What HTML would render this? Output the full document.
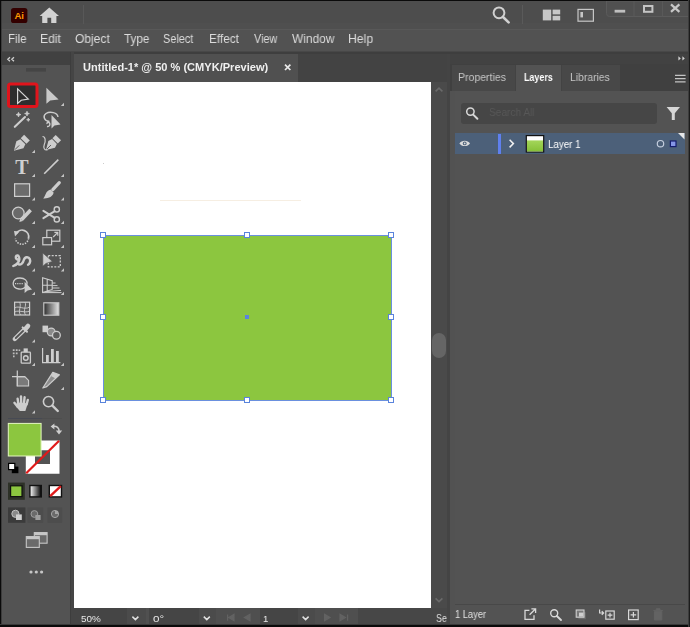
<!DOCTYPE html>
<html>
<head>
<meta charset="utf-8">
<title>Illustrator</title>
<style>
html,body{margin:0;padding:0;}
body{width:690px;height:627px;overflow:hidden;background:#535353;font-family:"Liberation Sans",sans-serif;position:relative;color:#dcdcdc;}
.abs{position:absolute;}
.t{position:absolute;white-space:nowrap;transform-origin:0 0;line-height:1;will-change:transform;}
#titlebar{left:0;top:0;width:690px;height:29px;background:#4d4d4d;}
#menubar{left:0;top:29px;width:690px;height:22px;background:#525252;border-top:1px solid #585858;box-sizing:border-box;}
.m{font-size:13px;color:#e4e4e4;top:33px;}
#strip{left:0;top:51px;width:690px;height:3px;background:#3e3e3e;border-top:1px solid #484848;box-sizing:border-box;}
#lefthead{left:0;top:52px;width:71px;height:13px;background:#414141;}
#toolbar{left:0;top:65px;width:71px;height:562px;background:#535353;}
#tooldiv{left:70px;top:52px;width:3px;height:575px;background:#454545;border-left:1px solid #3d3d3d;}
#tabbar{left:74px;top:54px;width:373px;height:28px;background:#434343;}
#doctab{left:74px;top:54px;width:224px;height:28px;background:#505050;}
#canvas{left:74px;top:82px;width:357px;height:526px;background:#ffffff;}
#vscroll{left:431px;top:82px;width:16px;height:526px;background:#4a4a4a;}
#thumb{left:432px;top:333px;width:14px;height:25px;border-radius:7px;background:#656565;}
#statusbar{left:74px;top:608px;width:373px;height:16px;background:#474747;}
#paneldiv{left:447px;top:54px;width:3px;height:573px;background:#444444;}
#panelhead{left:450px;top:54px;width:240px;height:10px;background:#424242;}
#paneltabs{left:450px;top:64px;width:240px;height:27px;background:#404040;}
#panel{left:450px;top:91px;width:240px;height:536px;background:#535353;}
.ptab{position:absolute;top:65px;height:26px;}
#rect{left:103px;top:235px;width:287px;height:164px;background:#8cc63f;border:1px solid #6a90de;}
.h{position:absolute;width:4px;height:4px;background:#fff;border:1px solid #5a84dc;}
#edgeL{left:0;top:0;width:1px;height:627px;background:#0a0a0a;border-right:1px solid #3c3c3c;}
#edgeT{left:0;top:0;width:690px;height:1px;background:#0a0a0a;}
#edgeB{left:0;top:624px;width:690px;height:3px;background:#0a0a0a;border-top:1px solid #3a3a3a;box-sizing:border-box;}
#edgeR{left:688px;top:0;width:1px;height:627px;background:#3c3c3c;border-right:1px solid #1c1c1c;}
.sb{font-size:10.5px;color:#e6e6e6;}
.pt{font-size:11px;}
</style>
</head>
<body>
<div id="titlebar" class="abs"></div>
<div id="menubar" class="abs"></div>

<div id="strip" class="abs"></div>
<div id="lefthead" class="abs"></div>
<div id="toolbar" class="abs"></div>
<div id="tooldiv" class="abs"></div>
<div id="tabbar" class="abs"></div>
<div id="doctab" class="abs"></div>

<div id="canvas" class="abs"></div>
<div id="vscroll" class="abs"></div>
<div id="thumb" class="abs"></div>
<div id="statusbar" class="abs"></div>
<div id="paneldiv" class="abs"></div>
<div id="panelhead" class="abs"></div>
<div id="paneltabs" class="abs"></div>
<div id="panel" class="abs"></div>
<div id="rect" class="abs"></div>
<svg id="tbsvg" class="abs" style="left:0;top:0" width="72" height="627" viewBox="0 0 72 627">
<defs>
<linearGradient id="gr1" x1="0" x2="1" y1="0" y2="0"><stop offset="0" stop-color="#2c2c2c"/><stop offset="1" stop-color="#e4e4e4"/></linearGradient>
<linearGradient id="gr2" x1="0" x2="1" y1="0" y2="0"><stop offset="0" stop-color="#ffffff"/><stop offset="1" stop-color="#000000"/></linearGradient>
<path id="fly" d="M0 0 L-3.2 0 L0 -3.2 Z" fill="#c4c4c4"/>
<g id="pen"><path d="M0 10.4 L-5 2 L-3.6 -2.2 L3.6 -2.2 L5 2 Z" fill="#cdcdcd"/><rect x="-4" y="-8" width="8" height="4.8" fill="#cdcdcd"/><path d="M0 9 L0 3" stroke="#535353" stroke-width="0.9"/></g>
</defs>
<!-- collapse chevrons and grip -->
<path d="M10 57.2 L7.8 59.2 L10 61.2 M14 57.2 L11.8 59.2 L14 61.2" stroke="#d0d0d0" stroke-width="1.3" fill="none"/>
<rect x="26" y="68" width="20" height="3.6" fill="#454545"/>
<!-- row1 -->
<rect x="8.5" y="84" width="28.5" height="22.5" rx="2" fill="#2e2e2e" stroke="#e0141c" stroke-width="3"/>
<path d="M17.6 88.8 L17.6 103.4 L21.2 100.2 L28.3 99 Z" fill="none" stroke="#d6d6d6" stroke-width="1.2" stroke-linejoin="miter"/>
<path d="M46.4 87.8 L46.4 103.8 L50.2 100.4 L58.6 99.4 Z" fill="#c9c9c9"/>
<use href="#fly" x="64" y="106"/>
<!-- row2 magic wand / lasso -->
<path d="M14.8 126.8 L25 117" stroke="#cdcdcd" stroke-width="2.1" stroke-linecap="round"/>
<path d="M18.5 112.3 L19.2 114 L21 114.6 L19.2 115.3 L18.5 117 L17.8 115.3 L16 114.6 L17.8 114 Z M27 111.2 L27.7 113 L29.4 113.6 L27.7 114.2 L27 116 L26.3 114.2 L24.6 113.6 L26.3 113 Z M28.3 118 L28.8 119.2 L30 119.7 L28.8 120.2 L28.3 121.4 L27.8 120.2 L26.6 119.7 L27.8 119.2 Z" fill="#cdcdcd" stroke="#cdcdcd" stroke-width="0.7"/>
<path d="M49.5 121.5 C44 121 42.5 116 46 113.5 C50 111 57.5 112.5 58 117 M47 126.5 C49.5 127 50.5 124.5 49.5 123 C48.5 121.5 46.3 122.5 47.2 124" fill="none" stroke="#cdcdcd" stroke-width="1.4"/>
<path d="M51.5 115 L51.5 128.5 L54.5 125.5 L60.5 124.5 Z" fill="#cdcdcd"/>
<!-- row3 pen / curvature -->
<use href="#pen" transform="translate(21.3 143.3) rotate(45)"/>
<use href="#fly" x="35" y="153"/>
<use href="#pen" transform="translate(53 143) rotate(45) scale(0.95)"/>
<path d="M42.5 136.5 C45.5 136.5 45.8 141 44.3 144.5 C43 148 44.5 150.5 47.5 149.8" fill="none" stroke="#cdcdcd" stroke-width="1.2"/>
<!-- row4 type / line -->
<text x="21.9" y="174" font-family="Liberation Serif, serif" font-size="20" font-weight="bold" text-anchor="middle" fill="#cfcfcf">T</text>
<use href="#fly" x="35" y="177"/>
<path d="M44.2 173.8 L58.3 159.6" stroke="#cdcdcd" stroke-width="1.6"/>
<use href="#fly" x="64" y="177"/>
<!-- row5 rect / brush -->
<rect x="14.6" y="183.8" width="15" height="12.6" fill="#6c6c6c" stroke="#cfcfcf" stroke-width="1.2"/>
<use href="#fly" x="35" y="200.5"/>
<path d="M59.3 182.6 L52.8 189.6" stroke="#cdcdcd" stroke-width="3.2" stroke-linecap="round"/>
<path d="M50.6 189.6 L53.6 192.6 C53 197 48 198.8 43.2 198.4 C45.8 196.4 45.2 191 50.6 189.6 Z" fill="#cdcdcd"/>
<use href="#fly" x="64" y="200.5"/>
<!-- row6 shaper / scissors -->
<circle cx="18.3" cy="213" r="5.8" fill="#6a6a6a" stroke="#cdcdcd" stroke-width="1.3"/>
<path d="M21.5 219.8 L30.6 210" stroke="#cdcdcd" stroke-width="3.6"/>
<path d="M19.3 222 L20.2 218.4 L22.8 221 Z" fill="#cdcdcd"/>
<use href="#fly" x="35" y="224"/>
<circle cx="56.8" cy="209.4" r="2.6" fill="none" stroke="#cdcdcd" stroke-width="1.4"/>
<circle cx="56.8" cy="219.4" r="2.6" fill="none" stroke="#cdcdcd" stroke-width="1.4"/>
<path d="M54.8 211.2 L43.4 218.2 M54.8 217.8 L43.4 210.8" stroke="#cdcdcd" stroke-width="2" stroke-linecap="round"/>
<use href="#fly" x="64" y="224"/>
<!-- row7 rotate / scale -->
<path d="M16.3 233.5 A6.6 6.6 0 0 1 28.5 238.2" fill="none" stroke="#cdcdcd" stroke-width="1.8"/>
<path d="M28.5 238.2 A6.6 6.6 0 0 1 15.4 238.6" fill="none" stroke="#cdcdcd" stroke-width="1.6" stroke-dasharray="1.4 1.2"/>
<path d="M14 231 L19.5 231.6 L15 236.6 Z" fill="#cdcdcd"/>
<use href="#fly" x="35" y="248"/>
<rect x="46.8" y="230.2" width="13" height="11" fill="none" stroke="#cdcdcd" stroke-width="1.2"/>
<rect x="42.8" y="237.6" width="8.8" height="7.2" fill="#535353" stroke="#cdcdcd" stroke-width="1.2"/>
<path d="M53.2 237 L57.6 232.6 M54.4 232.4 L57.8 232.4 L57.8 235.8" fill="none" stroke="#cdcdcd" stroke-width="1.2"/>
<use href="#fly" x="64" y="248"/>
<!-- row8 width / free transform -->
<path d="M13.3 266 C17 264.5 19.6 261.5 19.3 258 C19 255 16 254.6 15.8 257 C15.6 259 17.6 260 19.4 259.2 M17.6 263.6 C20.5 266.2 23.2 263 24 259.6 C24.8 256.6 28.6 256.4 29.8 259 C30.8 261.4 29.6 264 28 264.8" fill="none" stroke="#cdcdcd" stroke-width="2.4" stroke-linecap="round"/>
<use href="#fly" x="35" y="271.5"/>
<rect x="48.3" y="255.6" width="12" height="11.2" fill="none" stroke="#cdcdcd" stroke-width="1.3" stroke-dasharray="2 1.4"/>
<path d="M42.8 253 L42.8 266.2 L46 263.4 L52.4 261.4 Z" fill="#cdcdcd" stroke="#535353" stroke-width="0.6"/>
<use href="#fly" x="64" y="271.5"/>
<!-- row9 shape builder / perspective -->
<path d="M20 278 C25 278 27.5 281 27 284 C26.5 288 22 289.5 19 289 C15 288.5 12.8 286 13.2 283 C13.6 280 16 278 20 278 Z" fill="none" stroke="#cdcdcd" stroke-width="1.3"/>
<path d="M15 283.6 L23.5 283.6" stroke="#cdcdcd" stroke-width="1.2" stroke-dasharray="1.2 1"/>
<path d="M24.6 281.8 L24.6 293 L27.6 290.4 L32 289.4 Z" fill="#cdcdcd"/>
<use href="#fly" x="35" y="295"/>
<path d="M42.6 277.8 L52.2 280.6 L52.2 289.4 L42.6 292.6 Z M47.2 279.2 L47.2 291 M42.6 285.2 L52.2 285" fill="none" stroke="#cdcdcd" stroke-width="1.1"/>
<path d="M52.2 283 L55.5 283 M52.2 285.6 L57.5 285.6 M52.2 288 L59.5 288 M46 291.6 L61 290.4 M42.6 292.6 L61.5 292.6" fill="none" stroke="#cdcdcd" stroke-width="1"/>
<use href="#fly" x="64" y="295"/>
<!-- row10 mesh / gradient -->
<rect x="14.6" y="302.2" width="15" height="12.8" fill="#5e5e5e" stroke="#cdcdcd" stroke-width="1.2"/>
<path d="M14.6 308 C19 305 24 310.5 29.6 307 M19.5 302.2 C22 306 17.5 311 20.5 315 M25 302.2 C27 306 22.5 310 25.5 315 M14.6 312 C19 309.5 25 313.5 29.6 311" fill="none" stroke="#cdcdcd" stroke-width="0.9"/>
<rect x="43.8" y="302.8" width="15" height="12.4" fill="url(#gr1)" stroke="#c6c6c6" stroke-width="1.2"/>
<!-- row11 eyedropper / blend -->
<path d="M14.8 339 L24.6 329.4" stroke="#cdcdcd" stroke-width="4.4" stroke-linecap="round"/>
<path d="M15.8 338 L24.4 329.6" stroke="#535353" stroke-width="1.8" stroke-linecap="round"/>
<path d="M22.6 327.4 L27 331.8" stroke="#cdcdcd" stroke-width="2" stroke-linecap="round"/>
<path d="M25.4 329 L28 326" stroke="#cdcdcd" stroke-width="4.6" stroke-linecap="round"/>
<use href="#fly" x="35" y="342.5"/>
<rect x="42.5" y="325.6" width="5.6" height="6.6" fill="#cdcdcd"/>
<circle cx="51.2" cy="332" r="3.9" fill="#8a8a8a" stroke="#cdcdcd" stroke-width="1.2"/>
<circle cx="56.4" cy="335.2" r="3.9" fill="#5c5c5c" stroke="#cdcdcd" stroke-width="1.3"/>
<!-- row12 symbol sprayer / graph -->
<rect x="21.2" y="352.2" width="9.2" height="11" rx="0.8" fill="none" stroke="#cdcdcd" stroke-width="1.3"/>
<circle cx="25.8" cy="358" r="2.3" fill="none" stroke="#cdcdcd" stroke-width="1.4"/>
<rect x="23.6" y="348.4" width="4.2" height="3.8" fill="#cdcdcd"/>
<path d="M12.8 349.2 h1.8 v1.8 h-1.8 Z M15.8 349.2 h1.8 v1.8 h-1.8 Z M18.6 349.6 h1.6 v1.4 h-1.6 Z M12.8 352.4 h1.8 v1.8 h-1.8 Z M15.8 352.4 h1.8 v1.8 h-1.8 Z M13 355.6 h1.6 v1.6 h-1.6 Z" fill="#bdbdbd"/>
<use href="#fly" x="35" y="366"/>
<path d="M42.6 348 L42.6 362.6 L60.4 362.6" fill="none" stroke="#cdcdcd" stroke-width="1.2"/>
<rect x="46" y="355" width="2.8" height="7.2" fill="#cdcdcd"/>
<rect x="51" y="349" width="2.8" height="13.2" fill="#cdcdcd"/>
<rect x="56" y="351" width="2.8" height="11.2" fill="#cdcdcd"/>
<use href="#fly" x="64" y="366"/>
<!-- row13 artboard / slice -->
<path d="M17.3 376.6 L24.8 376.6 L28.6 380.4 L28.6 386 L17.3 386 Z" fill="#7a7a7a" stroke="#cdcdcd" stroke-width="1.1"/>
<path d="M17.3 370.4 L17.3 386.2 M12 376.6 L25 376.6" stroke="#cdcdcd" stroke-width="1.2"/>
<path d="M42.8 388 L52.8 372.4 L59.4 374.8 L46.8 386.6 Z" fill="#8d8d8d" stroke="#cdcdcd" stroke-width="1.2" stroke-linejoin="round"/>
<path d="M53 372.6 L59.2 374.8 L55.5 378.5 L51 376 Z" fill="#cdcdcd"/>
<use href="#fly" x="64" y="390"/>
<!-- row14 hand / zoom -->
<path d="M18.4 404 L17.6 398.8 M21.2 403 L21 396.4 M24 403 L24.6 397.2 M26.6 404.5 L27.8 400 M17.4 406.4 L14.4 402.8" stroke="#cdcdcd" stroke-width="2.4" stroke-linecap="round"/>
<path d="M16.8 402.5 L27.8 403.2 L25.4 411 L19.8 411 L16 406.5 Z" fill="#cdcdcd"/>
<use href="#fly" x="35" y="413.5"/>
<circle cx="48.5" cy="401.6" r="5.1" fill="none" stroke="#cdcdcd" stroke-width="1.6"/>
<path d="M52.4 405.6 L57.8 411" stroke="#cdcdcd" stroke-width="2.4" stroke-linecap="round"/>
<!-- separator -->
<rect x="8" y="418" width="34" height="1" fill="#474a53"/><rect x="42" y="418" width="20" height="1" fill="#4e4e4e"/>
<!-- fill / stroke -->
<path d="M25.8 440.4 H59.5 V473.7 H25.8 Z M35 450.2 V464 H50 V450.2 Z" fill="#ffffff" fill-rule="evenodd"/>
<path d="M26.2 473.3 L59.1 440.8" stroke="#e01a1a" stroke-width="2.2"/>
<rect x="8.3" y="423.4" width="32.8" height="32.6" fill="#8cc63f" stroke="#e4f7c0" stroke-width="1"/>
<path d="M52 426.5 C57 425.5 59.5 428 59 432" fill="none" stroke="#cdcdcd" stroke-width="1.6"/>
<path d="M54.4 423.4 L54.4 429.6 L50.6 426.5 Z M55.8 430.6 L62.2 430.6 L59 434.6 Z" fill="#cdcdcd"/>
<rect x="11.8" y="466.6" width="6.6" height="6.6" fill="#000"/>
<rect x="8.6" y="463.4" width="6.2" height="6.2" fill="#fff" stroke="#000" stroke-width="1.2"/>
<!-- color / gradient / none -->
<rect x="8" y="482.6" width="16.8" height="17.2" fill="#2d3127"/>
<rect x="10.6" y="485.8" width="11.4" height="10.8" fill="#8cc63f" stroke="#101010" stroke-width="1.2"/>
<rect x="29.9" y="485.5" width="11.4" height="11.4" fill="url(#gr2)" stroke="#111" stroke-width="1.4"/>
<rect x="49.3" y="485.5" width="12.2" height="11.4" fill="#fff" stroke="#111" stroke-width="1.4"/>
<path d="M50.2 496.2 L60.8 486.2" stroke="#e01a1a" stroke-width="2.4"/>
<!-- drawing modes -->
<rect x="8" y="507.4" width="17.4" height="15.4" fill="#3b3b3b"/>
<rect x="27.6" y="507.4" width="15.6" height="15.4" fill="#4d4d4d"/>
<rect x="47.6" y="507.4" width="14.6" height="15.4" fill="#4d4d4d"/>
<circle cx="15.4" cy="513.8" r="3.6" fill="#8a8a8a" stroke="#c4c4c4" stroke-width="1"/>
<rect x="16" y="514.4" width="5.8" height="5.6" fill="#d0d0d0"/>
<circle cx="34.4" cy="514" r="3.4" fill="#6a6a6a" stroke="#9d9d9d" stroke-width="1"/>
<rect x="35.4" y="515" width="5.2" height="5" fill="#9d9d9d"/>
<circle cx="55" cy="514" r="3.6" fill="#6a6a6a" stroke="#a5a5a5" stroke-width="1"/>
<rect x="55" y="511" width="3" height="3" fill="#a5a5a5"/>
<!-- screen mode -->
<rect x="34.3" y="532.6" width="12.8" height="10.6" fill="#6a6a6a" stroke="#c6c6c6" stroke-width="1.1"/>
<rect x="34.3" y="532.6" width="12.8" height="2.6" fill="#c6c6c6"/>
<rect x="26.3" y="536.6" width="13" height="10.8" fill="#6a6a6a" stroke="#c6c6c6" stroke-width="1.1"/>
<rect x="26.3" y="536.6" width="13" height="2.6" fill="#c6c6c6"/>
<!-- dots -->
<circle cx="31" cy="572" r="1.6" fill="#c6c6c6"/><circle cx="36.3" cy="572" r="1.6" fill="#c6c6c6"/><circle cx="41.6" cy="572" r="1.6" fill="#c6c6c6"/>
</svg>
<!-- title bar icons -->
<svg class="abs" style="left:0;top:0" width="690" height="30" viewBox="0 0 690 30">
<rect x="0" y="23" width="690" height="6" fill="#4f4f4f"/>
<rect x="11" y="8" width="16.4" height="15" rx="2.6" fill="#330000"/>
<text x="19.2" y="19.3" font-family="Liberation Sans, sans-serif" font-size="9.6" font-weight="bold" text-anchor="middle" fill="#ff9a00">Ai</text>
<path d="M49.3 7.6 L59 16 L56.4 16 L56.4 23 L51.2 23 L51.2 17.8 L47.4 17.8 L47.4 23 L42.2 23 L42.2 16 L39.6 16 Z" fill="#d2d2d2"/>
<rect x="83" y="5" width="1" height="19" fill="#585858"/>
<circle cx="499" cy="12.8" r="5.4" fill="none" stroke="#d0d0d0" stroke-width="2"/>
<path d="M503 17 L508.6 22.4" stroke="#d0d0d0" stroke-width="2.6" stroke-linecap="round"/>
<rect x="522" y="5" width="1" height="19" fill="#5a5a5a"/>
<rect x="542.8" y="9.6" width="8.4" height="10.8" fill="#c6c6c6"/>
<rect x="552.6" y="9.6" width="7.6" height="4.8" fill="#c6c6c6"/>
<rect x="552.6" y="15.8" width="7.6" height="4.6" fill="#c6c6c6"/>
<rect x="578" y="9.4" width="15.4" height="11.8" fill="#555" stroke="#c6c6c6" stroke-width="1.2"/>
<rect x="580.4" y="12" width="2.6" height="5.4" fill="#c6c6c6"/>
<path d="M606.5 1 L606.5 13.5 Q606.5 16.5 609.5 16.5 L690 16.5 L690 1 Z" fill="#505050" stroke="#5b5b5b" stroke-width="1"/>
<path d="M634 1 V16.5 M662.4 1 V16.5" stroke="#5b5b5b" stroke-width="1"/>
<rect x="614.6" y="9.8" width="10.6" height="2.8" fill="#bfbfbf"/>
<rect x="644" y="6" width="8.4" height="5.8" fill="none" stroke="#c4c4c4" stroke-width="2"/>
<path d="M671 4.4 L679.4 11.8 M679.4 4.4 L671 11.8" stroke="#c8c8c8" stroke-width="2.2"/>
</svg>
<!-- doc tab close -->
<svg class="abs" style="left:280px;top:60px" width="16" height="16" viewBox="0 0 16 16"><path d="M5 4.6 L10.4 10 M10.4 4.6 L5 10" stroke="#e8e8e8" stroke-width="1.7"/></svg>
<!-- artboard faint marks -->
<div class="abs" style="left:160px;top:200px;width:141px;height:1px;background:#f6eee2"></div>
<div class="abs" style="left:103px;top:163px;width:1px;height:1px;background:#ccc"></div>
<!-- selection handles -->
<div class="h" style="left:100px;top:232px"></div><div class="h" style="left:244px;top:232px"></div><div class="h" style="left:388px;top:232px"></div>
<div class="h" style="left:100px;top:314px"></div><div class="h" style="left:388px;top:314px"></div>
<div class="h" style="left:100px;top:397px"></div><div class="h" style="left:244px;top:397px"></div><div class="h" style="left:388px;top:397px"></div>
<div class="abs" style="left:245px;top:315px;width:4px;height:4px;background:#5a84dc"></div>
<!-- scroll arrows -->
<svg class="abs" style="left:431px;top:82px" width="16" height="526" viewBox="0 0 16 526">
<path d="M4.6 9.4 L8 6.2 L11.4 9.4" fill="none" stroke="#6a6a6a" stroke-width="1.6"/>
<path d="M4.6 516.4 L8 519.6 L11.4 516.4" fill="none" stroke="#6a6a6a" stroke-width="1.6"/>
</svg>
<!-- status bar -->
<div class="abs" style="left:74px;top:608px;width:53px;height:16px;background:#454545"></div>
<div class="abs" style="left:127px;top:608px;width:19px;height:16px;background:#4b4b4b"></div>
<div class="abs" style="left:146px;top:608px;width:3px;height:16px;background:#505050"></div>
<div class="abs" style="left:149px;top:608px;width:50px;height:16px;background:#454545"></div>
<div class="abs" style="left:199px;top:608px;width:17px;height:16px;background:#4b4b4b"></div>
<div class="abs" style="left:216px;top:608px;width:142px;height:16px;background:#4f4f4f"></div>
<div class="abs" style="left:260px;top:608px;width:38px;height:16px;background:#454545"></div>
<div class="abs" style="left:298px;top:608px;width:17px;height:16px;background:#4b4b4b"></div>
<svg class="abs" style="left:74px;top:608px" width="373" height="16" viewBox="0 0 373 16">
<path d="M58.4 8.6 L61.4 11.6 L64.4 8.6 M129.8 8.6 L132.8 11.6 L135.8 8.6 M228.6 8.6 L231.6 11.6 L234.6 8.6" fill="none" stroke="#e0e0e0" stroke-width="1.5"/>
<path d="M153.6 6.4 V12.8 M160 6.4 V12.8 L154.8 9.6 Z M176 6.4 V12.8 L170.4 9.6 Z M250.6 6.4 V12.8 L256 9.6 Z M266 6.4 V12.8 L271.4 9.6 Z M273.6 6.4 V12.8" fill="#626262" stroke="#626262" stroke-width="1.2"/>
</svg>
<!-- right panel -->
<div class="abs" style="left:452px;top:65px;width:63px;height:26px;background:#484848"></div>
<div class="abs" style="left:515px;top:65px;width:47px;height:26px;background:#535353"></div>
<div class="abs" style="left:562px;top:65px;width:58px;height:26px;background:#484848"></div>
<div class="abs" style="left:515px;top:65px;width:1px;height:26px;background:#434343"></div>
<div class="abs" style="left:561px;top:65px;width:1px;height:26px;background:#434343"></div>
<div class="abs" style="left:450px;top:91px;width:5px;height:533px;background:#525252"></div>
<div class="abs" style="left:455px;top:604px;width:230px;height:1px;background:#484848"></div>
<div class="abs" style="left:461px;top:103px;width:196px;height:21px;border-radius:3px;background:#464646"></div>
<div class="abs" style="left:455px;top:133px;width:229.5px;height:21px;background:#4c6079"></div>
<div class="abs" style="left:497.6px;top:134px;width:3.2px;height:19.5px;background:#5f80ee"></div>
<svg class="abs" style="left:450px;top:55px" width="240" height="572" viewBox="450 55 240 572">
<defs><linearGradient id="tg" x1="0" x2="0" y1="0" y2="1"><stop offset="0" stop-color="#a4d65a"/><stop offset="1" stop-color="#86c038"/></linearGradient></defs>
<path d="M678.4 56.2 L680.8 58.4 L678.4 60.6 Z M682.4 56.2 L684.8 58.4 L682.4 60.6 Z" fill="#d4d4d4"/>
<path d="M675 75.4 H685.6 M675 78.6 H685.6 M675 81.8 H685.6" stroke="#c4c4c4" stroke-width="1.3"/>
<circle cx="470.4" cy="111.6" r="3.7" fill="none" stroke="#d8d8d8" stroke-width="1.5"/>
<path d="M473.2 114.6 L477.4 118.8" stroke="#d8d8d8" stroke-width="2" stroke-linecap="round"/>
<path d="M666.6 107 H680 L674.8 113.2 V120 L671.8 120 V113.2 Z" fill="#d6d6d6"/>
<!-- eye -->
<path d="M459.4 143.4 C461.5 140 467.8 140 470 143.4 C467.8 146.8 461.5 146.8 459.4 143.4 Z" fill="#dcdcdc"/>
<circle cx="464.7" cy="143.4" r="1.9" fill="#4c6079"/><circle cx="464.7" cy="143.4" r="0.9" fill="#dcdcdc"/>
<path d="M509.6 139.8 L513.4 143.6 L509.6 147.4" fill="none" stroke="#f0f0f0" stroke-width="1.5"/>
<rect x="526.3" y="135.6" width="17.4" height="16.4" fill="#ffffff" stroke="#111" stroke-width="1.2"/>
<rect x="527" y="140.4" width="16" height="11" fill="url(#tg)"/>
<circle cx="660.5" cy="143.7" r="3.2" fill="none" stroke="#c4cede" stroke-width="1.2"/>
<rect x="670.4" y="141" width="5.6" height="5.6" fill="#8595e6" stroke="#141c6e" stroke-width="1.2"/>
<path d="M678 133 H684.5 V139.5 Z" fill="#e8e8e8"/>
<!-- footer icons -->
<path d="M529.4 610.4 H525 V619.4 H534 V615.2" fill="none" stroke="#d8d8d8" stroke-width="1.3"/>
<path d="M529.6 614.8 L535.4 609 M531.4 608.8 H535.6 V613" fill="none" stroke="#d8d8d8" stroke-width="1.3"/>
<circle cx="554.2" cy="613.2" r="3.5" fill="none" stroke="#d8d8d8" stroke-width="1.4"/>
<path d="M556.8 616 L561 620" stroke="#d8d8d8" stroke-width="1.9" stroke-linecap="round"/>
<rect x="578.4" y="612.2" width="7.4" height="7" fill="#6a6a6a"/>
<rect x="576.2" y="610" width="7.8" height="7.2" fill="#7a7a7a" stroke="#d0d0d0" stroke-width="1.1"/>
<rect x="579" y="612.6" width="4.4" height="4" fill="#cfcfcf"/>
<path d="M599.6 609.4 V613 H603.4 M601.8 611.2 L603.6 613 L601.8 614.8" fill="none" stroke="#d8d8d8" stroke-width="1.2"/>
<rect x="605.8" y="611" width="8.4" height="8.2" fill="none" stroke="#d8d8d8" stroke-width="1.2"/>
<path d="M607.6 615.1 H612.4 M610 612.7 V617.5" stroke="#d8d8d8" stroke-width="1.2"/>
<rect x="628.6" y="610" width="9.6" height="9.6" fill="none" stroke="#d8d8d8" stroke-width="1.2"/>
<path d="M630.6 614.8 H636.2 M633.4 612 V617.6" stroke="#d8d8d8" stroke-width="1.2"/>
<path d="M653.4 610.6 H662.8 M656.2 610.4 V608.8 H660 V610.4 M654.4 611.4 V620 H661.8 V611.4 Z" fill="#636363" stroke="#636363" stroke-width="1"/>
</svg>
<span class="t" style="left:7.58px;top:33.33px;font-size:12.6px;font-weight:normal;color:#dcdcdc;transform:scaleX(0.9173)">File</span>
<span class="t" style="left:39.64px;top:33.33px;font-size:12.6px;font-weight:normal;color:#dcdcdc;transform:scaleX(0.9610)">Edit</span>
<span class="t" style="left:74.92px;top:33.33px;font-size:12.6px;font-weight:normal;color:#dcdcdc;transform:scaleX(0.9566)">Object</span>
<span class="t" style="left:124.37px;top:33.33px;font-size:12.6px;font-weight:normal;color:#dcdcdc;transform:scaleX(0.9321)">Type</span>
<span class="t" style="left:163.37px;top:33.33px;font-size:12.6px;font-weight:normal;color:#dcdcdc;transform:scaleX(0.8638)">Select</span>
<span class="t" style="left:208.76px;top:33.33px;font-size:12.6px;font-weight:normal;color:#dcdcdc;transform:scaleX(0.9355)">Effect</span>
<span class="t" style="left:253.80px;top:33.33px;font-size:12.6px;font-weight:normal;color:#dcdcdc;transform:scaleX(0.8593)">View</span>
<span class="t" style="left:292.00px;top:33.33px;font-size:12.6px;font-weight:normal;color:#dcdcdc;transform:scaleX(0.9453)">Window</span>
<span class="t" style="left:348.43px;top:33.33px;font-size:12.6px;font-weight:normal;color:#dcdcdc;transform:scaleX(0.9714)">Help</span>
<span class="t" style="left:82.53px;top:61.56px;font-size:10.8px;font-weight:bold;color:#f0f0f0;transform:scaleX(1.0236)">Untitled-1* @ 50 % (CMYK/Preview)</span>
<span class="t" style="left:80.78px;top:613.67px;font-size:9.6px;font-weight:normal;color:#e8e8e8;transform:scaleX(1.0324)">50%</span>
<span class="t" style="left:152.70px;top:613.67px;font-size:9.6px;font-weight:normal;color:#e8e8e8;transform:scaleX(1.2121)">0°</span>
<span class="t" style="left:262.79px;top:613.67px;font-size:9.6px;font-weight:normal;color:#e8e8e8;transform:scaleX(0.9412)">1</span>
<span class="t" style="left:435.77px;top:612.91px;font-size:10.5px;font-weight:normal;color:#e0e0e0;transform:scaleX(0.8500)">Se</span>
<span class="t" style="left:457.56px;top:71.52px;font-size:11.2px;font-weight:normal;color:#c6c6c6;transform:scaleX(0.9394)">Properties</span>
<span class="t" style="left:523.80px;top:71.52px;font-size:11.2px;font-weight:bold;color:#ffffff;transform:scaleX(0.8000)">Layers</span>
<span class="t" style="left:570.37px;top:71.52px;font-size:11.2px;font-weight:normal;color:#c6c6c6;transform:scaleX(0.9277)">Libraries</span>
<span class="t" style="left:488.54px;top:107.19px;font-size:11.0px;font-weight:normal;color:#585858;transform:scaleX(0.9223)">Search All</span>
<span class="t" style="left:548.11px;top:139.29px;font-size:11.0px;font-weight:normal;color:#ffffff;transform:scaleX(0.8908)">Layer 1</span>
<span class="t" style="left:455.13px;top:609.41px;font-size:10.5px;font-weight:normal;color:#e2e2e2;transform:scaleX(0.8876)">1 Layer</span>
<div id="edgeL" class="abs"></div><div id="edgeT" class="abs"></div><div id="edgeB" class="abs"></div><div id="edgeR" class="abs"></div>
</body>
</html>
